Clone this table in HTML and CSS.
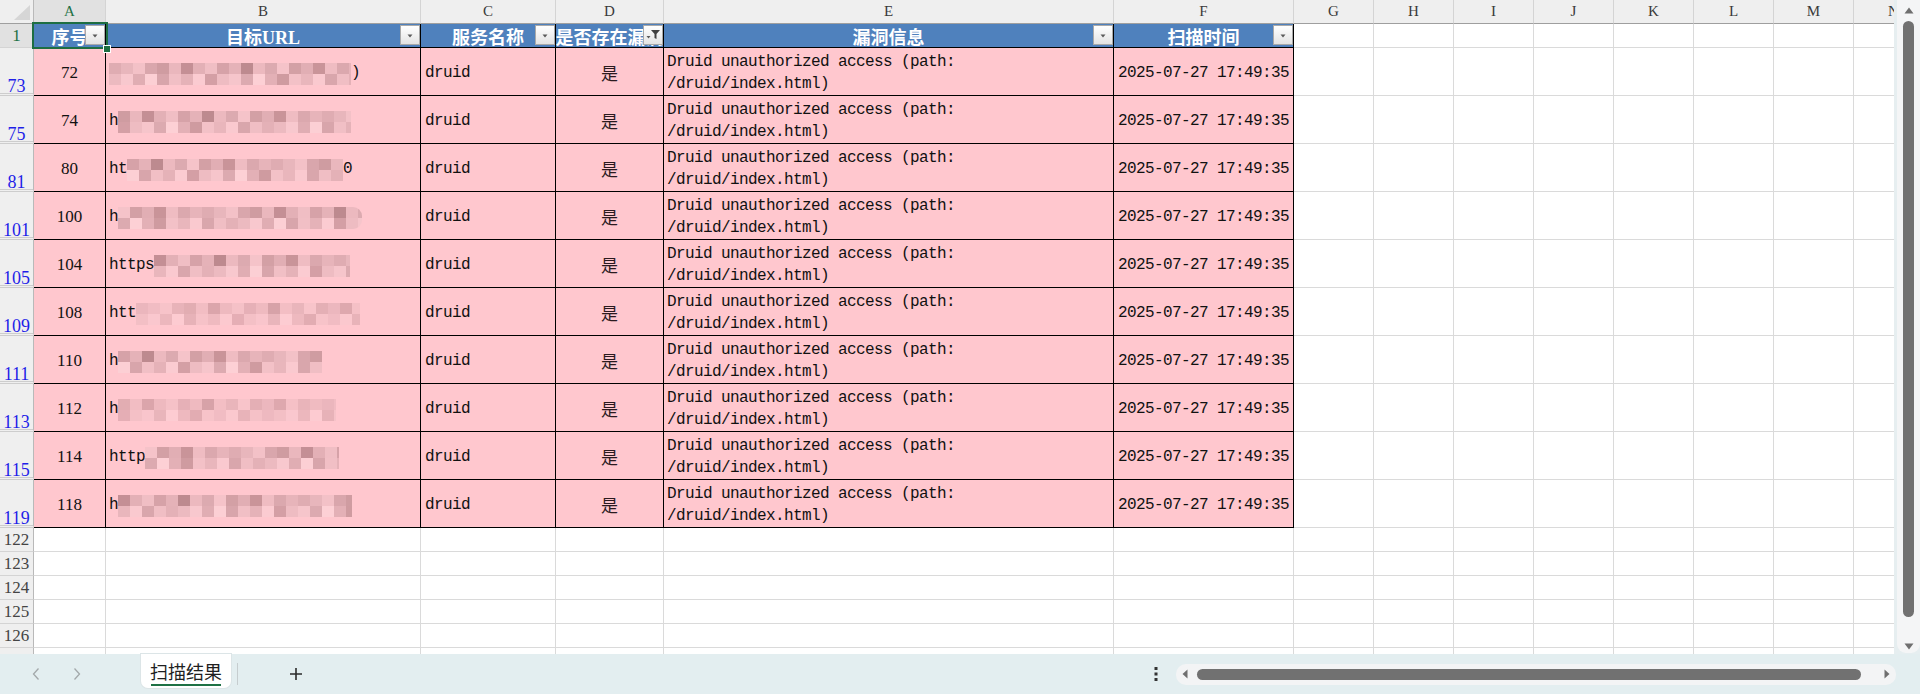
FILE: index.html
```html
<!DOCTYPE html>
<html lang="zh-CN">
<head>
<meta charset="utf-8">
<title>扫描结果</title>
<link rel="stylesheet" href="styles.css">
</head>
<body>
<div class="app">
  <div class="main">
    <div class="sheet">
      <!-- column headers -->
      <div class="corner"><svg width="33" height="23" viewBox="0 0 33 23"><polygon points="30,5 30,20 14,20" fill="#d6d6d6"/></svg></div>
      <div class="ch sel">A</div><div class="ch">B</div><div class="ch">C</div><div class="ch">D</div><div class="ch">E</div><div class="ch">F</div><div class="ch">G</div><div class="ch">H</div><div class="ch">I</div><div class="ch">J</div><div class="ch">K</div><div class="ch">L</div><div class="ch">M</div><div class="ch">N</div>

      <!-- row 1 : table header -->
      <div class="rh sel">1</div>
      <div class="h"><div class="t">序号</div><span class="fb"><svg width="18" height="18"><path d="M6.5 8.5h5l-2.5 3z" fill="#5a5a5a"/></svg></span><span class="selbox"></span></div>
      <div class="h"><div class="t">目标URL</div><span class="fb"><svg width="18" height="18"><path d="M6.5 8.5h5l-2.5 3z" fill="#5a5a5a"/></svg></span></div>
      <div class="h"><div class="t">服务名称</div><span class="fb"><svg width="18" height="18"><path d="M6.5 8.5h5l-2.5 3z" fill="#5a5a5a"/></svg></span></div>
      <div class="h"><div class="t">是否存在漏洞</div><span class="fb"><svg width="18" height="18"><path d="M2.5 10h4l-2 2.5z" fill="#5a5a5a"/><path d="M7 4h9l-3.5 4v5l-2-1v-4z" fill="#404040"/></svg></span></div>
      <div class="h"><div class="t">漏洞信息</div><span class="fb"><svg width="18" height="18"><path d="M6.5 8.5h5l-2.5 3z" fill="#5a5a5a"/></svg></span></div>
      <div class="h"><div class="t">扫描时间</div><span class="fb"><svg width="18" height="18"><path d="M6.5 8.5h5l-2.5 3z" fill="#5a5a5a"/></svg></span></div>
      <div class="c"></div><div class="c"></div><div class="c"></div><div class="c"></div><div class="c"></div><div class="c"></div><div class="c"></div><div class="c"></div>

      <!-- data rows -->
      <div class="rh f">73</div>
      <div class="d num">72</div>
      <div class="d u"><i class="mz v1" style="width:242px"></i>)</div>
      <div class="d">druid</div>
      <div class="d cj">是</div>
      <div class="d e">Druid unauthorized access (path: /druid/index.html)</div>
      <div class="d tm">2025-07-27 17:49:35</div>
      <div class="c"></div><div class="c"></div><div class="c"></div><div class="c"></div><div class="c"></div><div class="c"></div><div class="c"></div><div class="c"></div>

      <div class="rh f">75</div>
      <div class="d num">74</div>
      <div class="d u">h<i class="mz v2" style="width:233px"></i></div>
      <div class="d">druid</div>
      <div class="d cj">是</div>
      <div class="d e">Druid unauthorized access (path: /druid/index.html)</div>
      <div class="d tm">2025-07-27 17:49:35</div>
      <div class="c"></div><div class="c"></div><div class="c"></div><div class="c"></div><div class="c"></div><div class="c"></div><div class="c"></div><div class="c"></div>

      <div class="rh f">81</div>
      <div class="d num">80</div>
      <div class="d u">ht<i class="mz v3" style="width:216px"></i>0</div>
      <div class="d">druid</div>
      <div class="d cj">是</div>
      <div class="d e">Druid unauthorized access (path: /druid/index.html)</div>
      <div class="d tm">2025-07-27 17:49:35</div>
      <div class="c"></div><div class="c"></div><div class="c"></div><div class="c"></div><div class="c"></div><div class="c"></div><div class="c"></div><div class="c"></div>

      <div class="rh f">101</div>
      <div class="d num">100</div>
      <div class="d u">h<i class="mz v4 rnd" style="width:244px"></i></div>
      <div class="d">druid</div>
      <div class="d cj">是</div>
      <div class="d e">Druid unauthorized access (path: /druid/index.html)</div>
      <div class="d tm">2025-07-27 17:49:35</div>
      <div class="c"></div><div class="c"></div><div class="c"></div><div class="c"></div><div class="c"></div><div class="c"></div><div class="c"></div><div class="c"></div>

      <div class="rh f">105</div>
      <div class="d num">104</div>
      <div class="d u">https<i class="mz v5" style="width:196px"></i></div>
      <div class="d">druid</div>
      <div class="d cj">是</div>
      <div class="d e">Druid unauthorized access (path: /druid/index.html)</div>
      <div class="d tm">2025-07-27 17:49:35</div>
      <div class="c"></div><div class="c"></div><div class="c"></div><div class="c"></div><div class="c"></div><div class="c"></div><div class="c"></div><div class="c"></div>

      <div class="rh f">109</div>
      <div class="d num">108</div>
      <div class="d u">htt<i class="mz v1 light" style="width:224px"></i></div>
      <div class="d">druid</div>
      <div class="d cj">是</div>
      <div class="d e">Druid unauthorized access (path: /druid/index.html)</div>
      <div class="d tm">2025-07-27 17:49:35</div>
      <div class="c"></div><div class="c"></div><div class="c"></div><div class="c"></div><div class="c"></div><div class="c"></div><div class="c"></div><div class="c"></div>

      <div class="rh f">111</div>
      <div class="d num">110</div>
      <div class="d u">h<i class="mz v3" style="width:204px"></i></div>
      <div class="d">druid</div>
      <div class="d cj">是</div>
      <div class="d e">Druid unauthorized access (path: /druid/index.html)</div>
      <div class="d tm">2025-07-27 17:49:35</div>
      <div class="c"></div><div class="c"></div><div class="c"></div><div class="c"></div><div class="c"></div><div class="c"></div><div class="c"></div><div class="c"></div>

      <div class="rh f">113</div>
      <div class="d num">112</div>
      <div class="d u">h<i class="mz v2 light" style="width:218px"></i></div>
      <div class="d">druid</div>
      <div class="d cj">是</div>
      <div class="d e">Druid unauthorized access (path: /druid/index.html)</div>
      <div class="d tm">2025-07-27 17:49:35</div>
      <div class="c"></div><div class="c"></div><div class="c"></div><div class="c"></div><div class="c"></div><div class="c"></div><div class="c"></div><div class="c"></div>

      <div class="rh f">115</div>
      <div class="d num">114</div>
      <div class="d u">http<i class="mz v4" style="width:194px"></i></div>
      <div class="d">druid</div>
      <div class="d cj">是</div>
      <div class="d e">Druid unauthorized access (path: /druid/index.html)</div>
      <div class="d tm">2025-07-27 17:49:35</div>
      <div class="c"></div><div class="c"></div><div class="c"></div><div class="c"></div><div class="c"></div><div class="c"></div><div class="c"></div><div class="c"></div>

      <div class="rh f">119</div>
      <div class="d num">118</div>
      <div class="d u">h<i class="mz v5" style="width:234px"></i></div>
      <div class="d">druid</div>
      <div class="d cj">是</div>
      <div class="d e">Druid unauthorized access (path: /druid/index.html)</div>
      <div class="d tm">2025-07-27 17:49:35</div>
      <div class="c"></div><div class="c"></div><div class="c"></div><div class="c"></div><div class="c"></div><div class="c"></div><div class="c"></div><div class="c"></div>

      <!-- empty rows -->
      <div class="rh">122</div>
      <div class="c"></div><div class="c"></div><div class="c"></div><div class="c"></div><div class="c"></div><div class="c"></div><div class="c"></div><div class="c"></div><div class="c"></div><div class="c"></div><div class="c"></div><div class="c"></div><div class="c"></div><div class="c"></div>
      <div class="rh">123</div>
      <div class="c"></div><div class="c"></div><div class="c"></div><div class="c"></div><div class="c"></div><div class="c"></div><div class="c"></div><div class="c"></div><div class="c"></div><div class="c"></div><div class="c"></div><div class="c"></div><div class="c"></div><div class="c"></div>
      <div class="rh">124</div>
      <div class="c"></div><div class="c"></div><div class="c"></div><div class="c"></div><div class="c"></div><div class="c"></div><div class="c"></div><div class="c"></div><div class="c"></div><div class="c"></div><div class="c"></div><div class="c"></div><div class="c"></div><div class="c"></div>
      <div class="rh">125</div>
      <div class="c"></div><div class="c"></div><div class="c"></div><div class="c"></div><div class="c"></div><div class="c"></div><div class="c"></div><div class="c"></div><div class="c"></div><div class="c"></div><div class="c"></div><div class="c"></div><div class="c"></div><div class="c"></div>
      <div class="rh">126</div>
      <div class="c"></div><div class="c"></div><div class="c"></div><div class="c"></div><div class="c"></div><div class="c"></div><div class="c"></div><div class="c"></div><div class="c"></div><div class="c"></div><div class="c"></div><div class="c"></div><div class="c"></div><div class="c"></div>
      <div class="rh"></div>
      <div class="c"></div><div class="c"></div><div class="c"></div><div class="c"></div><div class="c"></div><div class="c"></div><div class="c"></div><div class="c"></div><div class="c"></div><div class="c"></div><div class="c"></div><div class="c"></div><div class="c"></div><div class="c"></div>
    </div>

    <div class="vs">
      <div class="vtrack">
        <svg class="va-up" width="10" height="7" viewBox="0 0 10 7"><path d="M5 0.5L9.5 6.5H0.5z" fill="#6f6f6f"/></svg>
        <div class="vthumb"></div>
        <svg class="va-down" width="10" height="7" viewBox="0 0 10 7"><path d="M0.5 0.5H9.5L5 6.5z" fill="#6f6f6f"/></svg>
      </div>
    </div>
  </div>

  <div class="tabs">
    <svg class="nav prev" width="8" height="14" viewBox="0 0 8 14"><path d="M6.5 1.5L1.5 7l5 5.5" fill="none" stroke="#a3a8aa" stroke-width="1.3"/></svg>
    <svg class="nav next" width="8" height="14" viewBox="0 0 8 14"><path d="M1.5 1.5L6.5 7l-5 5.5" fill="none" stroke="#a3a8aa" stroke-width="1.3"/></svg>
    <div class="tab"><span class="tab-label">扫描结果</span><span class="tab-line"></span></div>
    <span class="tsep"></span>
    <svg class="plus" width="14" height="14" viewBox="0 0 14 14"><path d="M7 1v12M1 7h12" stroke="#2b2b2b" stroke-width="1.6"/></svg>
    <svg class="dots" width="4" height="14" viewBox="0 0 4 14"><rect x="0.5" y="0" width="3" height="3" fill="#333"/><rect x="0.5" y="5.5" width="3" height="3" fill="#333"/><rect x="0.5" y="11" width="3" height="3" fill="#333"/></svg>
    <div class="htrack">
      <svg width="6" height="10" viewBox="0 0 6 10"><path d="M5.5 0.5V9.5L0.5 5z" fill="#6f6f6f"/></svg>
      <div class="hthumb"></div>
      <svg class="ha-right" width="6" height="10" viewBox="0 0 6 10"><path d="M0.5 0.5V9.5L5.5 5z" fill="#6f6f6f"/></svg>
    </div>
  </div>
</div>
</body>
</html>
```
FILE: styles.css
```css
* { box-sizing: border-box; margin: 0; padding: 0; }
html, body { width: 1920px; height: 694px; overflow: hidden; background: #fff; }
body { font-family: "Liberation Sans", "Noto Sans CJK SC", sans-serif; color: #111; }

.app { display: flex; flex-direction: column; height: 694px; }
.main { display: flex; height: 654px; }

.sheet {
  width: 1894px;
  height: 654px;
  overflow: hidden;
  display: grid;
  grid-template-columns: 34px 72px 315px 135px 108px 450px 180px repeat(8, 80px);
  grid-template-rows: 24px 24px repeat(10, 48px) repeat(6, 24px);
  align-content: start;
}

/* plain grid cell */
.c { border-right: 1px solid #dadada; border-bottom: 1px solid #dadada; min-width: 0; }

/* corner + column headers */
.corner { background: #efefef; border-right: 1px solid #b9b9b9; border-bottom: 1px solid #9f9f9f; }
.corner svg { display: block; }
.ch {
  background: #efefef;
  border-right: 1px solid #d4d4d4;
  border-bottom: 1px solid #9f9f9f;
  display: flex; align-items: center; justify-content: center;
  font: 15px "Liberation Serif", serif;
  color: #3a3a3a;
}
.ch.sel { background: #e1e1e1; color: #1e7145; }

/* row headers */
.rh {
  background: #efefef;
  border-right: 1px solid #b9b9b9;
  border-bottom: 1px solid #d4d4d4;
  display: flex; align-items: center; justify-content: center;
  font: 17px "Liberation Serif", serif;
  color: #444;
}
.rh.sel { background: #e1e1e1; color: #1e7145; }
.rh.f {
  color: #1f1fe8;
  font-size: 18px;
  line-height: 14px;
  align-items: flex-end;
  border-bottom: 3px double #cdcdcd;
}

/* table header row */
.h {
  position: relative;
  background: #4f81bd;
  border-right: 1px solid #000;
  border-bottom: 1px solid #000;
  color: #fff;
  font: bold 18px "Liberation Serif", "Noto Sans CJK SC", serif;
  min-width: 0;
}
.h .t {
  height: 100%;
  display: flex; align-items: center; justify-content: center;
  overflow: hidden; white-space: nowrap;
}
.fb {
  position: absolute; right: 0; top: 1px;
  width: 20px; height: 20px;
  border: 1px solid #a9a9a9;
  background: linear-gradient(#ffffff, #e3e3e3);
}
.fb svg { display: block; }
.selbox {
  position: absolute; left: -2px; top: -2px;
  width: 76px; height: 27px;
  border: 2px solid #1e6e42;
  z-index: 2;
}
.selbox::after {
  content: "";
  position: absolute; right: -5px; bottom: -6px;
  width: 6px; height: 6px;
  background: #1e6e42;
  border: 1px solid #fff;
}

/* data cells */
.d {
  background: #ffc7ce;
  border-right: 1px solid #000;
  border-bottom: 1px solid #000;
  color: #111;
  font: 16px "Liberation Mono", "Noto Sans CJK SC", monospace;
  letter-spacing: -0.6px;
  display: flex; align-items: center;
  padding: 2px 4px 0;
  overflow: hidden; white-space: nowrap;
  min-width: 0;
}
.d.num { justify-content: center; font: 17px "Liberation Serif", serif; letter-spacing: 0; }
.d.cj { justify-content: center; font: 17px "Noto Sans CJK SC", sans-serif; letter-spacing: 0; color: #2a1a1e; }
.d.tm { justify-content: center; padding: 2px 2px 0; }
.d.e { white-space: normal; line-height: 22px; padding: 3px 3px 0; }
.d.u { padding-left: 3px; }

/* pixelated (redacted) URL */
.mz {
  display: inline-block;
  flex: none;
  height: 22px;
  margin-top: 3px;
  background-image:
    linear-gradient(90deg,#dfacb2 0 12px,#e8b6bc 0 24px,#f3c1c7 0 36px,#d9a6ac 0 48px,#cf9ca1 0 60px,#eab7bd 0 72px,#c48f95 0 84px,#e3b0b6 0 96px,#f0bec4 0 108px,#d6a2a8 0 120px,#e5b2b8 0 132px,#bd8a8f 0 144px,#ecb9bf 0 156px,#dcaab0 0 168px,#f5c3c9 0 180px,#d3a0a5 0 192px,#e1aeb4 0 204px,#c99499 0 216px,#efbcc2 0 228px,#dba8ae 0 240px,#e7b4ba 0 252px),
    linear-gradient(90deg,#ecbac0 0 12px,#f8c8ce 0 24px,#e0adb3 0 36px,#fccfd4 0 48px,#d8a5ab 0 60px,#f1bfc5 0 72px,#e5b2b8 0 84px,#fbcbd1 0 96px,#d49fa5 0 108px,#eebcc2 0 120px,#f6c5cb 0 132px,#dcaab0 0 144px,#fdd0d5 0 156px,#e3b0b6 0 168px,#cf9ba0 0 180px,#f3c1c7 0 192px,#e9b6bc 0 204px,#fac9cf 0 216px,#d9a6ac 0 228px,#f0bec4 0 240px,#e4b1b7 0 252px);
  background-size: 252px 11px, 252px 11px;
  background-repeat: repeat-x;
  background-position: 0 0, 0 11px;
}
.mz.v2 { background-position: -48px 0, -96px 11px; }
.mz.v3 { background-position: -108px 0, -36px 11px; }
.mz.v4 { background-position: -168px 0, -132px 11px; }
.mz.v5 { background-position: -72px 0, -192px 11px; }
.mz.light { opacity: .6; }
.mz.rnd { border-radius: 0 9px 9px 0; }

/* vertical scrollbar */
.vs { width: 26px; height: 654px; background: #e6eef0; padding-left: 3px; }
.vtrack {
  height: 653px;
  background: #f4f5f6;
  border-radius: 0 0 9px 9px;
  display: flex; flex-direction: column; align-items: center;
}
.va-up { margin-top: 7px; display: block; }
.vthumb { margin-top: 7px; width: 11px; height: 596px; background: #717171; border-radius: 6px; }
.va-down { margin-top: 26px; display: block; }

/* sheet tabs bar */
.tabs {
  height: 40px;
  background: #e3eef0;
  display: flex; align-items: center;
}
.nav { display: block; flex: none; }
.prev { margin-left: 32px; }
.next { margin-left: 33px; }
.tab {
  align-self: flex-start;
  margin-left: 60px;
  width: 90px; height: 34px;
  background: #fff;
  border-radius: 0 0 7px 7px;
  box-shadow: 0 0 0 1px #dce5e7;
  display: flex; flex-direction: column; align-items: center;
  padding-top: 5px;
}
.tab-label { font: 18px "Noto Sans CJK SC", sans-serif; line-height: 24px; color: #1f1f1f; }
.tab-line { margin-top: 1px; width: 70px; height: 2px; background: #1e7145; }
.tsep { margin-left: 6px; width: 1px; height: 22px; background: #c6cdcf; }
.plus { margin-left: 51px; display: block; }
.dots { margin-left: auto; display: block; }
.htrack {
  margin-left: 18px; margin-right: 24px;
  width: 720px; height: 21px;
  background: #f3f4f5;
  border-radius: 10px;
  display: flex; align-items: center;
  padding: 0 6px;
}
.htrack svg { display: block; flex: none; }
.hthumb { margin-left: 9px; width: 664px; height: 11px; background: #717171; border-radius: 6px; }
.ha-right { margin-left: 23px; }
```
